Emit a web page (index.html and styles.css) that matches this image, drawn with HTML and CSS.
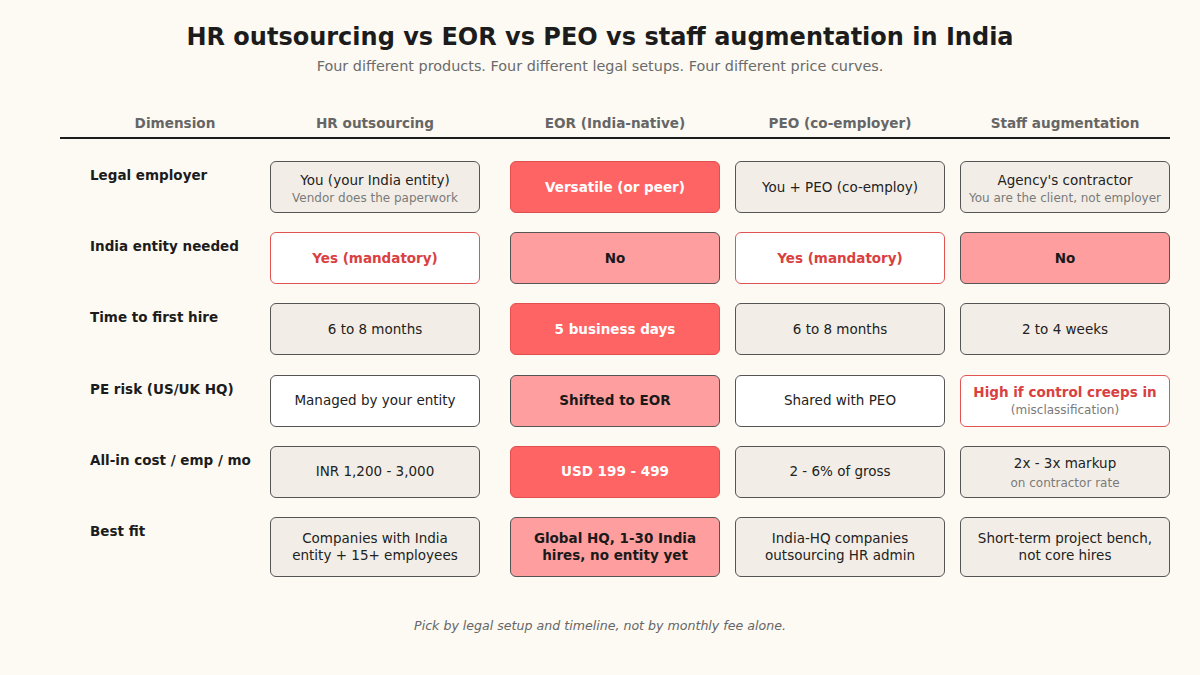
FILE: index.html
```html
<!DOCTYPE html>
<html>
<head>
<meta charset="utf-8">
<link rel="stylesheet" href="styles.css">
</head>
<body>
<div class="page">
  <header class="head">
    <h1 class="title">HR outsourcing vs EOR vs PEO vs staff augmentation in India</h1>
    <p class="subtitle">Four different products. Four different legal setups. Four different price curves.</p>
  </header>

  <div class="thead">
    <div class="th lab">Dimension</div>
    <div class="th c1">HR outsourcing</div>
    <div class="th c2">EOR (India-native)</div>
    <div class="th c3">PEO (co-employer)</div>
    <div class="th c4">Staff augmentation</div>
  </div>

  <div class="tbody">
    <div class="rl">Legal employer</div>
    <div class="cell c1"><div class="card neutral low"><span class="main">You (your India entity)</span><span class="sub">Vendor does the paperwork</span></div></div>
    <div class="cell c2"><div class="card strong"><span class="main b">Versatile (or peer)</span></div></div>
    <div class="cell c3"><div class="card neutral"><span class="main">You + PEO (co-employ)</span></div></div>
    <div class="cell c4"><div class="card neutral low"><span class="main">Agency's contractor</span><span class="sub">You are the client, not employer</span></div></div>

    <div class="rl">India entity needed</div>
    <div class="cell c1"><div class="card alert"><span class="main b">Yes (mandatory)</span></div></div>
    <div class="cell c2"><div class="card soft"><span class="main b">No</span></div></div>
    <div class="cell c3"><div class="card alert"><span class="main b">Yes (mandatory)</span></div></div>
    <div class="cell c4"><div class="card soft"><span class="main b">No</span></div></div>

    <div class="rl">Time to first hire</div>
    <div class="cell c1"><div class="card neutral"><span class="main">6 to 8 months</span></div></div>
    <div class="cell c2"><div class="card strong"><span class="main b">5 business days</span></div></div>
    <div class="cell c3"><div class="card neutral"><span class="main">6 to 8 months</span></div></div>
    <div class="cell c4"><div class="card neutral"><span class="main">2 to 4 weeks</span></div></div>

    <div class="rl">PE risk (US/UK HQ)</div>
    <div class="cell c1"><div class="card plain"><span class="main">Managed by your entity</span></div></div>
    <div class="cell c2"><div class="card soft"><span class="main b">Shifted to EOR</span></div></div>
    <div class="cell c3"><div class="card plain"><span class="main">Shared with PEO</span></div></div>
    <div class="cell c4"><div class="card alert"><span class="main b">High if control creeps in</span><span class="sub">(misclassification)</span></div></div>

    <div class="rl">All-in cost / emp / mo</div>
    <div class="cell c1"><div class="card neutral"><span class="main">INR 1,200 - 3,000</span></div></div>
    <div class="cell c2"><div class="card strong"><span class="main b">USD 199 - 499</span></div></div>
    <div class="cell c3"><div class="card neutral"><span class="main">2 - 6% of gross</span></div></div>
    <div class="cell c4"><div class="card neutral wide"><span class="main">2x - 3x markup</span><span class="sub">on contractor rate</span></div></div>

    <div class="rl">Best fit</div>
    <div class="cell c1"><div class="card neutral tall"><span class="main">Companies with India<br>entity + 15+ employees</span></div></div>
    <div class="cell c2"><div class="card soft tall"><span class="main b">Global HQ, 1-30 India<br>hires, no entity yet</span></div></div>
    <div class="cell c3"><div class="card neutral tall"><span class="main">India-HQ companies<br>outsourcing HR admin</span></div></div>
    <div class="cell c4"><div class="card neutral tall"><span class="main">Short-term project bench,<br>not core hires</span></div></div>
  </div>

  <p class="foot">Pick by legal setup and timeline, not by monthly fee alone.</p>
</div>
</body>
</html>
```

FILE: styles.css
```css
* { box-sizing: border-box; }
html, body {
  margin: 0;
  padding: 0;
  background: #fdfaf3;
}
body {
  width: 1200px;
  height: 675px;
  overflow: hidden;
  font-family: "DejaVu Sans", "Liberation Sans", sans-serif;
  color: #1c1c1c;
}
.page {
  padding-top: 22px;
}
.head {
  text-align: center;
}
.title {
  margin: 0;
  font-size: 24px;
  line-height: 30px;
  font-weight: bold;
  color: #1c1c1c;
}
.subtitle {
  margin: 4px 0 0;
  font-size: 14.4px;
  line-height: 20px;
  color: #6b6b6b;
}
.thead,
.tbody {
  margin-left: 60px;
  width: 1110px;
  display: grid;
  grid-template-columns: 210px 210px 240px 225px 225px;
}
.thead {
  margin-top: 33px;
  height: 30px;
  border-bottom: 2px solid #1c1c1c;
}
.tbody {
  margin-top: 22px;
  grid-template-rows: 52px 52px 52px 52px 52px 60px;
  row-gap: 19.2px;
}
.th {
  height: 28px;
  display: flex;
  align-items: center;
  justify-content: center;
  font-size: 13.6px;
  font-weight: bold;
  color: #666;
}
.th.lab {
  padding-left: 20px;
}
.c2 { padding-left: 30px; }
.c3, .c4 { padding-left: 15px; }
.rl {
  padding: 6px 0 0 30px;
  font-size: 13.5px;
  line-height: 16px;
  font-weight: bold;
  color: #1c1c1c;
}
.cell {
  display: flex;
}
.card {
  width: 210px;
  height: 52px;
  border: 1.5px solid #555;
  border-radius: 6px;
  display: flex;
  flex-direction: column;
  align-items: center;
  justify-content: center;
  text-align: center;
}
.card.tall {
  height: 60px;
}
.card.low {
  padding-top: 4px;
}
.main {
  font-size: 13.5px;
  line-height: 17px;
  color: #222;
}
.main.b {
  font-weight: bold;
}
.sub {
  margin-top: 1px;
  font-size: 12px;
  line-height: 16px;
  color: #7a7a7a;
}
.card.wide {
  padding-top: 2px;
}
.card.wide .sub {
  margin-top: 3px;
}
.neutral { background: #f2eee7; }
.plain { background: #ffffff; }
.strong {
  background: #ff6464;
  border-color: #e24f4f;
}
.strong .main { color: #ffffff; }
.soft {
  background: #ff9e9e;
  border-color: #555;
}
.soft .main { color: #1a1a1a; }
.alert {
  background: #ffffff;
  border-color: #e05454;
}
.alert .main { color: #d94141; }
.foot {
  margin: 41px 0 0;
  text-align: center;
  font-size: 12.6px;
  line-height: 16px;
  font-style: italic;
  color: #666;
}
```
